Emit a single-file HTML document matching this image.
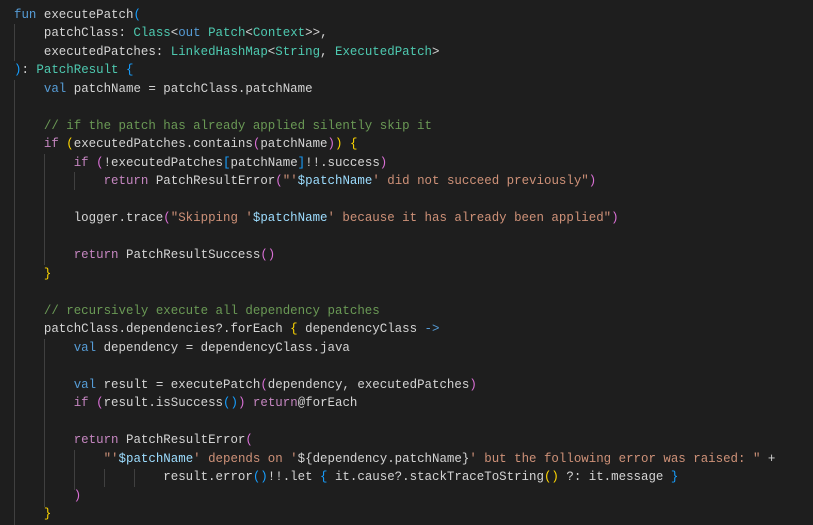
<!DOCTYPE html>
<html><head><meta charset="utf-8"><style>
html,body{margin:0;padding:0;background:#1e1e1e;width:813px;height:525px;overflow:hidden}
.c{position:absolute;left:14px;top:6px;font-family:"Liberation Mono",monospace;font-size:12.45px;line-height:18.48px;color:#d4d4d4;white-space:pre}
.k{color:#569cd6}.p{color:#c586c0}.t{color:#4ec9b0}.s{color:#ce9178}.m{color:#6a9955}.v{color:#9cdcfe}
.b1{color:#ffd700}.b2{color:#da70d6}.b3{color:#179fff}
.g{position:absolute;width:1px;background:#404040}
</style></head><body>
<div class="g" style="left:14px;top:24px;height:37px"></div>
<div class="g" style="left:14px;top:80px;height:445px"></div>
<div class="g" style="left:44px;top:154px;height:111px"></div>
<div class="g" style="left:74px;top:172px;height:18px"></div>
<div class="g" style="left:44px;top:339px;height:168px"></div>
<div class="g" style="left:74px;top:450px;height:40px"></div>
<div class="g" style="left:104px;top:469px;height:18px"></div>
<div class="g" style="left:134px;top:469px;height:18px"></div>
<div class="c"><span class="k">fun</span> executePatch<span class="b3">(</span>
    patchClass: <span class="t">Class</span>&lt;<span class="k">out</span> <span class="t">Patch</span>&lt;<span class="t">Context</span>&gt;&gt;,
    executedPatches: <span class="t">LinkedHashMap</span>&lt;<span class="t">String</span>, <span class="t">ExecutedPatch</span>&gt;
<span class="b3">)</span>: <span class="t">PatchResult</span> <span class="b3">{</span>
    <span class="k">val</span> patchName = patchClass.patchName

    <span class="m">// if the patch has already applied silently skip it</span>
    <span class="p">if</span> <span class="b1">(</span>executedPatches.contains<span class="b2">(</span>patchName<span class="b2">)</span><span class="b1">)</span> <span class="b1">{</span>
        <span class="p">if</span> <span class="b2">(</span>!executedPatches<span class="b3">[</span>patchName<span class="b3">]</span>!!.success<span class="b2">)</span>
            <span class="p">return</span> PatchResultError<span class="b2">(</span><span class="s">"'</span><span class="v">$patchName</span><span class="s">' did not succeed previously"</span><span class="b2">)</span>

        logger.trace<span class="b2">(</span><span class="s">"Skipping '</span><span class="v">$patchName</span><span class="s">' because it has already been applied"</span><span class="b2">)</span>

        <span class="p">return</span> PatchResultSuccess<span class="b2">()</span>
    <span class="b1">}</span>

    <span class="m">// recursively execute all dependency patches</span>
    patchClass.dependencies?.forEach <span class="b1">{</span> dependencyClass <span class="k">-&gt;</span>
        <span class="k">val</span> dependency = dependencyClass.java

        <span class="k">val</span> result = executePatch<span class="b2">(</span>dependency, executedPatches<span class="b2">)</span>
        <span class="p">if</span> <span class="b2">(</span>result.isSuccess<span class="b3">()</span><span class="b2">)</span> <span class="p">return</span>@forEach

        <span class="p">return</span> PatchResultError<span class="b2">(</span>
            <span class="s">"'</span><span class="v">$patchName</span><span class="s">' depends on '</span>${dependency.patchName}<span class="s">' but the following error was raised: "</span> +
                    result.error<span class="b3">()</span>!!.let <span class="b3">{</span> it.cause?.stackTraceToString<span class="b1">()</span> ?: it.message <span class="b3">}</span>
        <span class="b2">)</span>
    <span class="b1">}</span>
</div>
</body></html>
